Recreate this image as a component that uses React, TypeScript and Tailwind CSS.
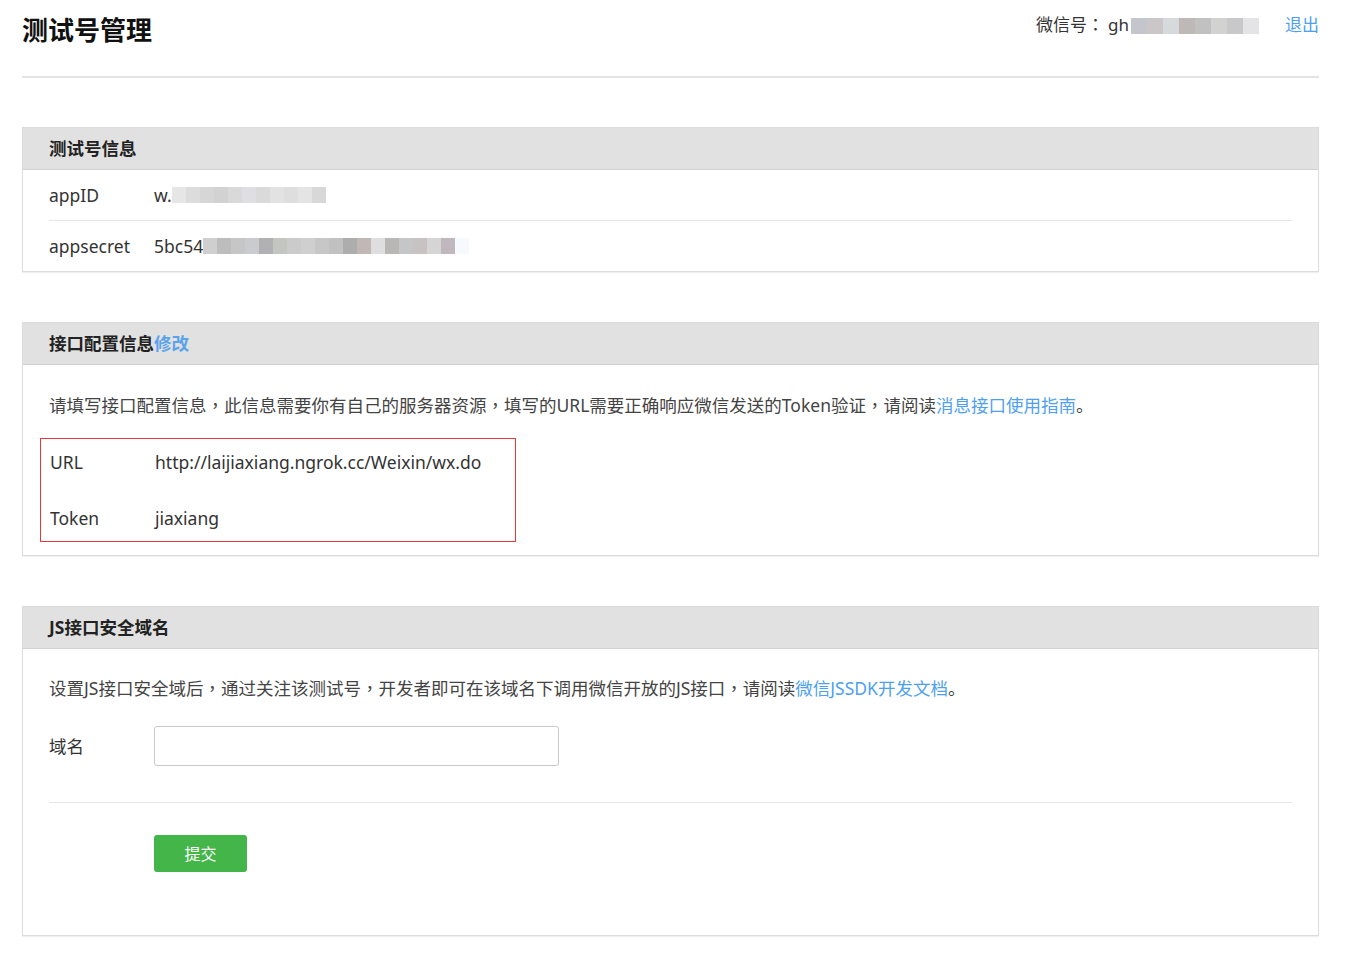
import React from 'react';

const FONT = { fontFamily: '"Noto Sans", "Noto Sans CJK SC", sans-serif' };
const TC = { fontFamily: '"Noto Sans CJK TC", sans-serif' };

// 打码块的灰度
const APPID_BLUR = ['#e6e6e6', '#dcdcdc', '#d6d6d6', '#d2d2d2', '#d9d9d9', '#dfdfe3', '#dadada', '#e2e2e2', '#dedede', '#e4e4e4', '#d8d8d8'];
const SECRET_BLUR = ['#cfcfcf', '#bdbdbd', '#c6c6c6', '#c9cbcf', '#b1b1b3', '#c3c5c0', '#cbcbcb', '#cfcfcf', '#c7c7c7', '#c1c1c1', '#adadad', '#c1b8b6', '#dedee1', '#b9b7b5', '#c4c6c7', '#c9c2c3', '#d4d5d4', '#c0b8bd', '#f7fafd'];
const HEADER_BLUR = ['#c4c6ce', '#cbc7c8', '#d7dadc', '#beb8b7', '#c1c1c1', '#d2d2d0', '#c8c8ca', '#e4e4e6'];

function Blur({ colors, w }: { colors: string[]; w: number }) {
  return (
    <span className="inline-flex h-[16px] items-center align-middle">
      {colors.map((c, i) => (
        <span key={i} className="h-[16px]" style={{ width: w, backgroundColor: c }} />
      ))}
    </span>
  );
}

// 居中的全角标点
const P = ({ c }: { c: string }) => <span style={TC}>{c}</span>;

function Panel({ title, children }: { title: React.ReactNode; children: React.ReactNode }) {
  return (
    <div className="border border-[#dcdcdc] bg-white shadow-[0_1px_1px_rgba(0,0,0,0.06)]">
      <div className="h-[42px] bg-[#e1e1e1] border-b border-[#d2d2d2] px-[26px] flex items-center text-[17.5px] font-bold text-[#222]">
        {title}
      </div>
      {children}
    </div>
  );
}

export default function App() {
  return (
    <div className="bg-white min-h-[964px] text-[#333]" style={FONT}>
      <div className="ml-[22px] w-[1297px]">
        {/* 顶部 */}
        <div className="h-[78px] flex items-start justify-between border-b-2 border-[#e3e3e3]">
          <h1 className="mt-[12px] text-[26px] font-bold text-[#111] leading-[36px]">测试号管理</h1>
          <div className="mt-[12px] flex items-center text-[17px] leading-[24px]">
            <span className="text-[#333]">微信号<P c="：" /></span>
            <span className="ml-[4px] text-[#333]">gh</span>
            <span className="ml-[2px]"><Blur colors={HEADER_BLUR} w={16} /></span>
            <a className="ml-[26px] text-[#4e9ff2]">退出</a>
          </div>
        </div>

        <div className="mt-[49px] flex flex-col gap-[50px]">
          {/* 测试号信息 */}
          <Panel title="测试号信息">
            <div className="px-[26px] text-[17.5px]">
              <div className="h-[51px] flex items-center border-b border-[#e6e6e6]">
                <span className="w-[105px] text-[#333]">appID</span>
                <span className="text-[#333]">w.</span>
                <Blur colors={APPID_BLUR} w={14} />
              </div>
              <div className="h-[50px] flex items-center">
                <span className="w-[105px] text-[#333]">appsecret</span>
                <span className="text-[#333]">5bc54</span>
                <Blur colors={SECRET_BLUR} w={14} />
              </div>
            </div>
          </Panel>

          {/* 接口配置信息 */}
          <Panel title={<>接口配置信息<a className="text-[#5aa3ec] font-bold">修改</a></>}>
            <div className="px-[26px] pt-[28px] pb-[13px]">
              <p className="text-[17.5px] leading-[24px] text-[#444]">
                请填写接口配置信息<P c="，" />此信息需要你有自己的服务器资源<P c="，" />填写的URL需要正确响应微信发送的Token验证<P c="，" />请阅读
                <a className="text-[#4e9ff2]">消息接口使用指南</a>。
              </p>
              <div className="mt-[21px] ml-[-9px] w-[476px] border border-[#e4393c] pl-[9px] py-[8px] text-[17.5px] text-[#333]">
                <div className="h-[30px] flex items-center">
                  <span className="w-[105px]">URL</span>
                  <span>http://laijiaxiang.ngrok.cc/Weixin/wx.do</span>
                </div>
                <div className="mt-[26px] h-[30px] flex items-center">
                  <span className="w-[105px]">Token</span>
                  <span>jiaxiang</span>
                </div>
              </div>
            </div>
          </Panel>

          {/* JS接口安全域名 */}
          <Panel title="JS接口安全域名">
            <div className="px-[26px] pt-[27px] pb-[63px]">
              <p className="text-[17.5px] leading-[24px] text-[#444]">
                设置JS接口安全域后<P c="，" />通过关注该测试号<P c="，" />开发者即可在该域名下调用微信开放的JS接口<P c="，" />请阅读
                <a className="text-[#4e9ff2]">微信JSSDK开发文档</a>。
              </p>
              <div className="mt-[26px] flex items-center pb-[36px] border-b border-[#e6e6e6]">
                <span className="w-[105px] text-[17.5px] text-[#333]">域名</span>
                <input className="w-[405px] h-[40px] border border-[#c9c9c9] rounded-[3px] px-2 outline-none" />
              </div>
              <div className="mt-[32px] pl-[105px]">
                <button className="w-[93px] h-[37px] rounded-[3px] bg-[#44b549] text-white text-[16px]">提交</button>
              </div>
            </div>
          </Panel>
        </div>
      </div>
    </div>
  );
}
